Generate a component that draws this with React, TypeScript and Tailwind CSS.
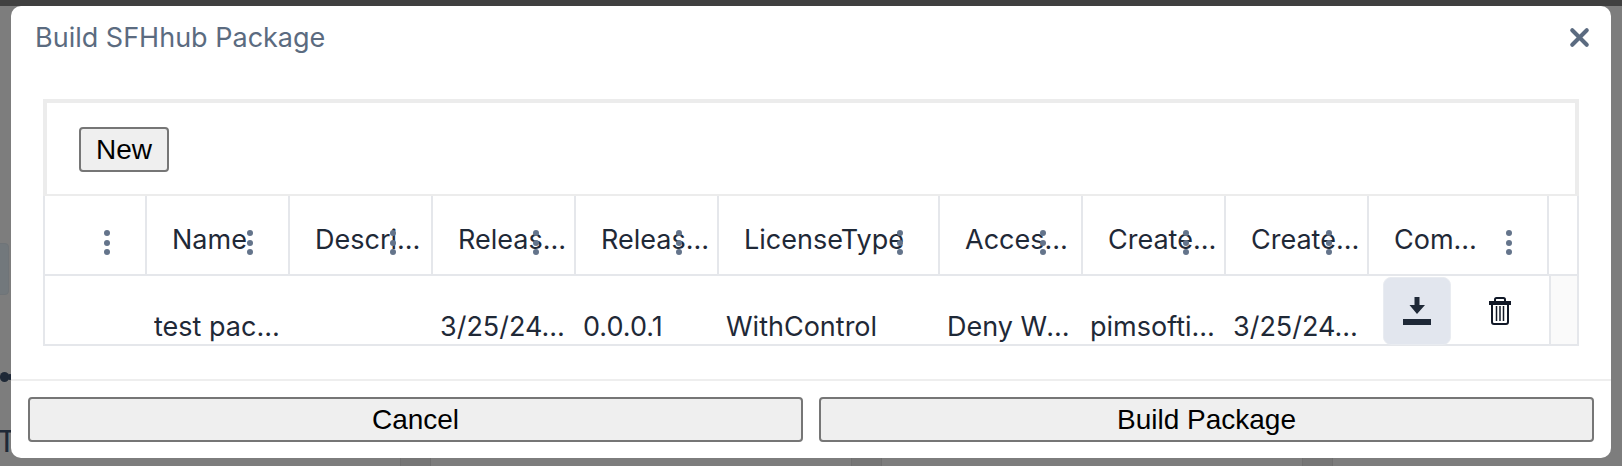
import { X } from 'lucide-react'

const headers = [
  { label: '', width: 'w-[102px]', pad: 'pr-[4px]' },
  { label: 'Name', width: 'w-[143px]', pad: 'pr-[4px]' },
  { label: 'Description', width: 'w-[143px]', pad: 'pr-[4px]' },
  { label: 'ReleaseDate', width: 'w-[143px]', pad: 'pr-[4px]' },
  { label: 'ReleaseVersion', width: 'w-[143px]', pad: 'pr-[4px]' },
  { label: 'LicenseType', width: 'w-[221px]', pad: 'pr-[4px]' },
  { label: 'AccessMode', width: 'w-[143px]', pad: 'pr-[4px]' },
  { label: 'CreatedBy', width: 'w-[143px]', pad: 'pr-[4px]' },
  { label: 'CreatedDate', width: 'w-[143px]', pad: 'pr-[4px]' },
  { label: 'Commands', width: 'w-[180px]', pad: 'pr-[70px]' },
]

const cells = [
  { label: '', width: 'w-[102px]' },
  { label: 'test package', width: 'w-[143px]' },
  { label: '', width: 'w-[143px]' },
  { label: '3/25/24, 10:00', width: 'w-[143px]' },
  { label: '0.0.0.1', width: 'w-[143px]' },
  { label: 'WithControl', width: 'w-[221px]' },
  { label: 'Deny Write', width: 'w-[143px]' },
  { label: 'pimsoftinc.com', width: 'w-[143px]' },
  { label: '3/25/24, 10:00', width: 'w-[143px]' },
]

function Kebab() {
  return (
    <div className="absolute right-[35px] top-[34px] flex flex-col gap-[3.5px]">
      <span className="size-[6px] rounded-full bg-[#64748b]" />
      <span className="size-[6px] rounded-full bg-[#64748b]" />
      <span className="size-[6px] rounded-full bg-[#64748b]" />
    </div>
  )
}

export default function App() {
  return (
    <div className="relative h-[466px] w-[1622px] overflow-hidden bg-[#7d7d7d] font-['Inter',sans-serif]">
      <div className="h-[6px] bg-[#404040]" />

      {/* Page behind the backdrop */}
      <div className="absolute left-[-6px] top-[243px] h-[52px] w-[15px] rounded-[4px] border border-[#6f7478] bg-[#72787c]" />
      <div className="absolute left-0 top-[372px] h-[10px] w-[9px] rounded-full bg-[#1f2937]" />
      <div className="absolute left-[7px] top-[374px] size-[6px] rounded-full bg-[#1f2937]" />
      <span className="absolute left-[-3px] top-[425px] font-['Liberation_Sans',sans-serif] text-[32px] leading-[32px] text-[#1f2937]">T</span>
      <div className="absolute left-[400px] top-[458px] h-[8px] w-[31px] border-x border-[#707070] bg-[#767676]" />
      <div className="absolute left-[851px] top-[458px] h-[8px] w-[31px] border-x border-[#707070] bg-[#767676]" />
      <div className="absolute left-[1302px] top-[458px] h-[8px] w-[31px] border-x border-[#707070] bg-[#767676]" />

      <div className="relative z-10 ml-[11px] flex h-[452px] w-[1600px] flex-col rounded-[10px] bg-white">
        <div className="flex h-[62px] items-center justify-between pl-[24px] pr-[17px]">
          <h2 className="pt-[2px] text-[27px] font-normal text-[#5b6b80]">Build SFHhub Package</h2>
          <X size={29} strokeWidth={3.4} className="text-[#5b6b80]" />
        </div>

        <div className="h-[311px] px-[32px] pt-[31px]">
          <div className="flex flex-col">
            <div className="flex h-[97px] items-center border-[4px] border-b-[2px] border-[#ececec] pl-[32px] pt-[2px]">
              <button className="h-[45px] w-[90px] rounded-[4px] border-2 border-[#767676] bg-[#efefef] font-['Liberation_Sans',sans-serif] text-[28px] text-black">New</button>
            </div>

            {/* Header row */}
            <div className="flex h-[80px] border-x-[2px] border-b-[2px] border-[#e5e7eb] text-[27px] text-[#1f2937]">
              {headers.map(h => (
                <div key={h.label} className={`relative flex shrink-0 items-center border-r-[2px] border-[#e5e7eb] pl-[25px] pt-[10px] ${h.width} ${h.pad}`}>
                  <span className="truncate">{h.label}</span>
                  <Kebab />
                </div>
              ))}
              <div className="flex-1" />
            </div>

            {/* Data row */}
            <div className="flex h-[70px] border-x-[2px] border-b-[2px] border-[#e5e7eb] text-[27px] leading-[34px] text-[#1f2937]">
              {cells.map((c, i) => (
                <div key={i} className={`flex shrink-0 items-end px-[7px] ${c.width}`}>
                  <span className="truncate">{c.label}</span>
                </div>
              ))}
              <div className="flex w-[182px] shrink-0 items-start border-r-[2px] border-[#e5e7eb] pl-[14px]">
                <div className="mt-px flex h-[68px] w-[68px] items-center justify-center rounded-[8px] border border-[#e9ecf1] bg-[#e2e6ee]">
                  <svg width="28" height="28" viewBox="0 0 28 28" className="text-[#1f2937]" fill="currentColor">
                    <rect x="0" y="22" width="28" height="6" />
                    <path d="M11.500 0h5v8h5.500L14 17 6.500 8h5z" />
                  </svg>
                </div>
                <svg width="22" height="28" viewBox="0 0 22 28" className="ml-[38px] mt-[21px] text-[#111827]" fill="none" stroke="currentColor" strokeWidth="2">
                  <path d="M0 6h22" strokeWidth="4" />
                  <path d="M6 5V2.500A1.500 1.500 0 0 1 7.500 1h7A1.500 1.500 0 0 1 16 2.500V5" />
                  <path d="M3 7v18a2 2 0 0 0 2 2h12a2 2 0 0 0 2-2V7" />
                  <path d="M7.500 9v15M11 9v15M14.500 9v15" strokeWidth="1.500" />
                </svg>
              </div>
              <div className="flex-1 bg-[#fafafa]" />
            </div>
          </div>
        </div>

        <div className="flex flex-1 gap-[16px] border-t-[2px] border-[#eeeeee] px-[17px] pt-[16px]">
          <button className="h-[45px] flex-1 rounded-[4px] border-2 border-[#767676] bg-[#efefef] font-['Liberation_Sans',sans-serif] text-[28px] text-black">Cancel</button>
          <button className="h-[45px] flex-1 rounded-[4px] border-2 border-[#767676] bg-[#efefef] font-['Liberation_Sans',sans-serif] text-[28px] text-black">Build Package</button>
        </div>
      </div>
    </div>
  )
}
